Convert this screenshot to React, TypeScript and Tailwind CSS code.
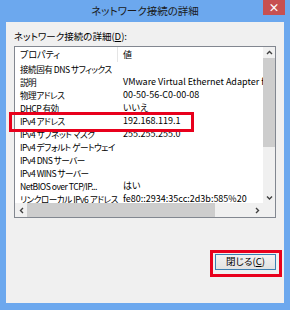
import React from "react";

const rows: [string, string][] = [
  ["接続固有 DNS サフィックス", ""],
  ["説明", "VMware Virtual Ethernet Adapter for VMnet8"],
  ["物理アドレス", "00-50-56-C0-00-08"],
  ["DHCP 有効", "いいえ"],
  ["IPv4 アドレス", "192.168.119.1"],
  ["IPv4 サブネット マスク", "255.255.255.0"],
  ["IPv4 デフォルト ゲートウェイ", ""],
  ["IPv4 DNS サーバー", ""],
  ["IPv4 WINS サーバー", ""],
  ["NetBIOS over TCP/IP...", "はい"],
  ["リンクローカル IPv6 アドレス", "fe80::2934:35cc:2d3b:585%20"],
];

function Chevron({ dir }: { dir: "up" | "down" | "left" | "right" }) {
  const pts = {
    up: "2,6 4.5,3.5 7,6",
    down: "2,3.5 4.5,6 7,3.5",
    left: "6,2 3.5,4.5 6,7",
    right: "3,2 5.5,4.5 3,7",
  }[dir];
  return (
    <svg width="9" height="9" viewBox="0 0 9 9">
      <polyline points={pts} fill="none" stroke="#404040" strokeWidth="1.4" />
    </svg>
  );
}

export default function App() {
  return (
    <div
      className="relative flex h-[310px] w-[290px] flex-col bg-[#6ca8ee] text-[9.5px] text-black [font-feature-settings:'palt']"
      style={{ fontFamily: "'Noto Sans CJK JP', 'Noto Sans', sans-serif" }}
    >
      {/* Title bar */}
      <div className="relative flex h-[22px] items-center justify-center">
        <span className="text-[10.5px] leading-none text-[#1a1a1a]">ネットワーク接続の詳細</span>
        <div className="absolute right-[5px] top-0 flex h-[15px] w-[22px] items-center justify-center bg-[#c75050] text-[11px] font-bold leading-none text-white">
          ×
        </div>
      </div>

      {/* Client */}
      <div className="mx-[6px] mb-[7px] flex flex-1 flex-col bg-[#f0f0f0] px-[8px] pt-[6px]">
        <div className="h-[16px] leading-[16px]">
          ネットワーク接続の詳細(<span className="underline">D</span>):
        </div>

        {/* List box */}
        <div className="mt-[2px] flex h-[172px] flex-col border border-[#828790] bg-white">
          <div className="flex min-h-0 flex-1">
            <div className="flex min-w-0 flex-1 flex-col overflow-hidden text-[9px]">
              <div className="flex h-[15px] shrink-0 leading-[16px]">
                <div className="w-[103px] shrink-0 border-r border-[#e5e5e5] pl-[5px]">プロパティ</div>
                <div className="pl-[5px]">値</div>
              </div>
              {rows.map(([k, v]) => (
                <div key={k} className="flex h-[13px] shrink-0 leading-[14px]">
                  <div className="w-[104px] shrink-0 overflow-hidden whitespace-nowrap pl-[5px] text-[8.6px] tracking-[-0.5px]">{k}</div>
                  <div className="whitespace-nowrap pl-[4px]">{v}</div>
                </div>
              ))}
            </div>
            {/* Vertical scrollbar */}
            <div className="flex w-[12px] shrink-0 flex-col bg-[#f0f0f0]">
              <div className="flex h-[11px] items-center justify-center">
                <Chevron dir="up" />
              </div>
              <div className="h-[89px] bg-[#cdcdcd]" />
              <div className="flex-1" />
              <div className="flex h-[11px] items-center justify-center">
                <Chevron dir="down" />
              </div>
            </div>
          </div>
          {/* Horizontal scrollbar */}
          <div className="flex h-[14px] shrink-0">
            <div className="flex flex-1 items-center bg-[#f0f0f0]">
              <div className="flex w-[12px] justify-center">
                <Chevron dir="left" />
              </div>
              <div className="h-full w-[188px] bg-[#cdcdcd]" />
              <div className="flex-1" />
              <div className="flex w-[12px] justify-center">
                <Chevron dir="right" />
              </div>
            </div>
            <div className="w-[12px] bg-[#f0f0f0]" />
          </div>
        </div>

        {/* Buttons */}
        <div className="mt-[36px] flex justify-end pr-0">
          <button className="flex h-[16px] w-[61px] items-center justify-center border border-[#3c7fb1] bg-gradient-to-b from-[#f2f2f2] to-[#e2e2e2] text-[9.5px] leading-none">
            閉じる(<span className="underline">C</span>)
          </button>
        </div>
      </div>

      {/* Red annotation boxes */}
      <div className="pointer-events-none absolute left-[9px] top-[112px] h-[20px] w-[185px] border-[3px] border-[#e8001c]" />
      <div className="pointer-events-none absolute left-[210px] top-[250px] h-[27px] w-[72px] border-[3px] border-[#e8001c]" />
    </div>
  );
}
